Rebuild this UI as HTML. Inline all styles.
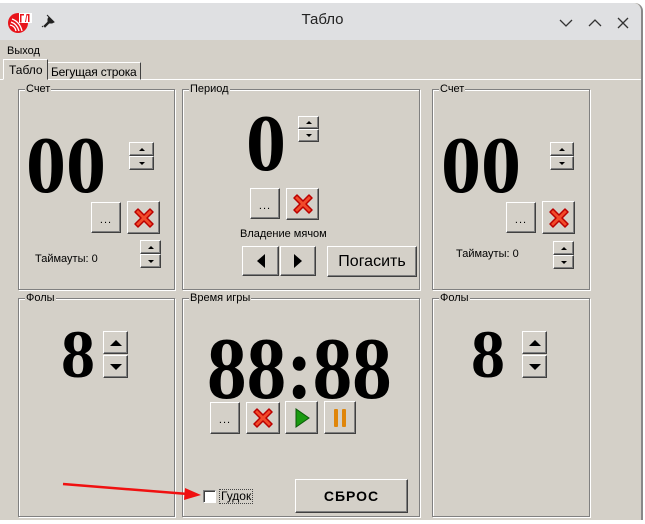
<!DOCTYPE html><html><head><meta charset="utf-8"><style>
*{margin:0;padding:0;box-sizing:border-box}
body{width:645px;height:524px;background:#fff;position:relative;overflow:hidden;font-family:"Liberation Sans",sans-serif;font-size:11px;color:#000}
.a{position:absolute;white-space:nowrap}
.win{left:0;top:3px;width:643px;height:517px;background:#d4d0c8;border-right:2px solid #888;border-radius:0 8px 0 0}
.tb{left:0;top:3px;width:641px;height:37px;background:#dfe0e2;border-radius:0 8px 0 0}
.grp{position:absolute;border:1px solid #808080;box-shadow:inset 1px 1px 0 #fff,1px 1px 0 #fff}
.lbl{position:absolute;top:-7px;left:6px;background:#d4d0c8;font-size:11px;line-height:12px;padding:0 1px;white-space:nowrap}
.btn{position:absolute;background:#d4d0c8;border:1px solid;border-color:#fff #404040 #404040 #fff;box-shadow:inset -1px -1px 0 #808080;display:flex;align-items:center;justify-content:center;white-space:nowrap}
.big{position:absolute;font-family:"Liberation Serif",serif;font-weight:bold;line-height:1}
.up::after{content:"";border-left:3px solid transparent;border-right:3px solid transparent;border-bottom:3px solid #000}
.dn::after{content:"";border-left:3px solid transparent;border-right:3px solid transparent;border-top:3px solid #000}
.up2::after{content:"";border-left:6px solid transparent;border-right:6px solid transparent;border-bottom:6px solid #000}
.dn2::after{content:"";border-left:6px solid transparent;border-right:6px solid transparent;border-top:6px solid #000}
.dots{font-size:11px;letter-spacing:1px;padding-top:4px}
</style></head><body>
<div class="a win"></div>
<div class="a tb"></div>
<svg class="a" style="left:7px;top:10px" width="26" height="24"><circle cx="11" cy="13" r="10" fill="#e8141b"/><path d="M4 12 q6 2 8 9 M3 15 q5 1 6 6 M5 9 q8 3 10 12" stroke="#fff" stroke-width="1.3" fill="none"/><rect x="12" y="3" width="13" height="10" fill="#fff"/><path d="M13 4h4v1.5h-2.5v7h-1.5z M18 12 l1.5-8h3v8h-1.5v-6.5h-1l-1 6.5z" fill="#e8141b"/></svg>
<svg class="a" style="left:41px;top:14px" width="14" height="14"><path d="M6 1l7 7-2 1-3 0-4 4-1-1 4-4 0-3 1-2z M2 12l-1 1" fill="#222" stroke="#222"/></svg>
<div class="a" style="left:0;width:645px;top:11px;text-align:center;font-size:15px;color:#222">Табло</div>
<svg class="a" style="left:557px;top:15px" width="80" height="16" stroke="#333" stroke-width="1.3" fill="none"><path d="M3 5l6 6 6-6"/><path d="M32 11l6-6 6 6"/><path d="M61 3l10 10M71 3l-10 10"/></svg>
<div class="a" style="left:7px;top:45px;font-size:11px">Выход</div>
<div class="a" style="left:0;top:79px;width:641px;height:1px;background:#fff"></div>
<div class="a" style="left:47px;top:62px;width:94px;height:18px;border:1px solid;border-color:#fff #404040 transparent #fff;padding:2px 3px;font-size:12px;letter-spacing:-0.2px">Бегущая строка</div>
<div class="a" style="left:3px;top:59px;width:45px;height:21px;background:#d4d0c8;border:1px solid;border-color:#fff #404040 transparent #fff;padding:3px 5px;font-size:12px">Табло</div>

<div class="grp" style="left:18px;top:89px;width:157px;height:201px"><div class="lbl">Счет</div></div>
<div class="grp" style="left:182px;top:89px;width:238px;height:201px"><div class="lbl">Период</div></div>
<div class="grp" style="left:432px;top:89px;width:158px;height:201px"><div class="lbl">Счет</div></div>
<div class="grp" style="left:18px;top:298px;width:157px;height:219px"><div class="lbl">Фолы</div></div>
<div class="grp" style="left:182px;top:298px;width:238px;height:219px"><div class="lbl">Время игры</div></div>
<div class="grp" style="left:432px;top:298px;width:158px;height:219px"><div class="lbl">Фолы</div></div>

<!-- left score -->
<div class="big" style="left:26px;top:126px;font-size:80px">00</div>
<div class="btn up" style="left:129px;top:142px;width:25px;height:14px"></div>
<div class="btn dn" style="left:129px;top:156px;width:25px;height:14px"></div>
<div class="btn dots" style="left:91px;top:202px;width:30px;height:31px">...</div>
<div class="btn" style="left:127px;top:201px;width:33px;height:33px"><svg width="24" height="24"><path d="M3 6l3-3 6 6 6-6 3 3-6 6 6 6-3 3-6-6-6 6-3-3 6-6z" fill="#f24a2a" stroke="#b00" stroke-width="1.5" stroke-linejoin="round"/></svg></div>
<div class="a" style="left:35px;top:253px;font-size:11px">Таймауты: 0</div>
<div class="btn up" style="left:140px;top:240px;width:21px;height:14px"></div>
<div class="btn dn" style="left:140px;top:254px;width:21px;height:14px"></div>

<!-- period -->
<div class="big" style="left:246px;top:104px;font-size:80px">0</div>
<div class="btn up" style="left:298px;top:116px;width:21px;height:13px"></div>
<div class="btn dn" style="left:298px;top:129px;width:21px;height:13px"></div>
<div class="btn dots" style="left:250px;top:188px;width:30px;height:31px">...</div>
<div class="btn" style="left:286px;top:188px;width:33px;height:32px"><svg width="24" height="24"><path d="M3 6l3-3 6 6 6-6 3 3-6 6 6 6-3 3-6-6-6 6-3-3 6-6z" fill="#f24a2a" stroke="#b00" stroke-width="1.5" stroke-linejoin="round"/></svg></div>
<div class="a" style="left:240px;top:228px;font-size:11px">Владение мячом</div>
<div class="btn" style="left:242px;top:246px;width:37px;height:30px"><svg width="10" height="14"><path d="M9 0v14L1 7z"/></svg></div>
<div class="btn" style="left:280px;top:246px;width:36px;height:30px"><svg width="10" height="14"><path d="M1 0v14l8-7z"/></svg></div>
<div class="btn" style="left:327px;top:246px;width:90px;height:31px;font-size:16px">Погасить</div>

<!-- right score -->
<div class="big" style="left:441px;top:126px;font-size:80px">00</div>
<div class="btn up" style="left:550px;top:142px;width:24px;height:14px"></div>
<div class="btn dn" style="left:550px;top:156px;width:24px;height:14px"></div>
<div class="btn dots" style="left:506px;top:202px;width:30px;height:31px">...</div>
<div class="btn" style="left:542px;top:201px;width:33px;height:33px"><svg width="24" height="24"><path d="M3 6l3-3 6 6 6-6 3 3-6 6 6 6-3 3-6-6-6 6-3-3 6-6z" fill="#f24a2a" stroke="#b00" stroke-width="1.5" stroke-linejoin="round"/></svg></div>
<div class="a" style="left:456px;top:248px;font-size:11px">Таймауты: 0</div>
<div class="btn up" style="left:553px;top:241px;width:21px;height:14px"></div>
<div class="btn dn" style="left:553px;top:255px;width:21px;height:14px"></div>

<!-- fouls -->
<div class="big" style="left:61px;top:320px;font-size:68px">8</div>
<div class="btn up2" style="left:103px;top:331px;width:25px;height:23px"></div>
<div class="btn dn2" style="left:103px;top:355px;width:25px;height:23px"></div>
<div class="big" style="left:471px;top:320px;font-size:68px">8</div>
<div class="btn up2" style="left:522px;top:331px;width:25px;height:23px"></div>
<div class="btn dn2" style="left:522px;top:355px;width:25px;height:23px"></div>

<!-- time -->
<div class="big" style="left:207px;top:326px;font-size:88px;transform:scaleX(0.9);transform-origin:0 0">88:88</div>
<div class="btn dots" style="left:210px;top:402px;width:30px;height:32px">...</div>
<div class="btn" style="left:246px;top:402px;width:34px;height:32px"><svg width="24" height="24"><path d="M3 6l3-3 6 6 6-6 3 3-6 6 6 6-3 3-6-6-6 6-3-3 6-6z" fill="#f24a2a" stroke="#b00" stroke-width="1.5" stroke-linejoin="round"/></svg></div>
<div class="btn" style="left:285px;top:401px;width:33px;height:33px"><svg width="16" height="20"><path d="M2 1v18l13-9z" fill="#1a9a10" stroke="#0a5a08"/></svg></div>
<div class="btn" style="left:324px;top:401px;width:32px;height:33px"><svg width="16" height="20"><rect x="2" y="1" width="4" height="18" rx="1" fill="#e0860a"/><rect x="10" y="1" width="4" height="18" rx="1" fill="#e0860a"/></svg></div>
<div class="a" style="left:203px;top:490px;width:13px;height:13px;background:#fff;border:1px solid;border-color:#808080 #fff #fff #808080;box-shadow:inset 1px 1px 0 #404040"></div>
<div class="a" style="left:219px;top:489px;font-size:12px;border:1px dotted #444;padding:0 1px;line-height:13px">Гудок</div>
<div class="btn" style="left:295px;top:479px;width:113px;height:34px;font-size:14px;font-weight:bold;letter-spacing:1px">СБРОС</div>

<svg class="a" style="left:0;top:0" width="645" height="524"><path d="M63 484L188 494" stroke="#f01010" stroke-width="2.5"/><path d="M201 495L185 488L184 500z" fill="#f01010"/></svg>
<div class="a" style="left:0;top:520px;width:645px;height:4px;background:#fff"></div>
</body></html>
